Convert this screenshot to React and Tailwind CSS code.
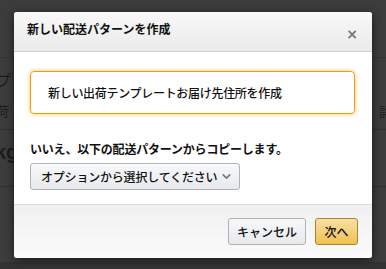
import { ChevronDown } from "lucide-react";

const jp = { fontFamily: '"Noto Sans CJK JP", "Noto Sans", sans-serif' };

function Backdrop() {
  // page content seen through the dark overlay
  return (
    <div className="flex flex-col w-full h-full text-[#1c1c1c]">
      <div className="h-[58px] border-b border-[#333]" />
      <div className="h-[72px] border-b border-[#2f2f2f] flex justify-between">
        <div className="flex flex-col ml-[-4px] pt-[12px] gap-[11px] text-[15px] leading-[20px]">
          <span>プ</span>
          <span className="text-[13px]">荷</span>
        </div>
        <div className="pt-[44px] mr-[-6px] text-[13px]">詳</div>
      </div>
      <div className="h-[57px] border-b border-[#2f2f2f] pt-[10px] ml-[-5px] text-[20px] font-bold leading-[24px]" style={{ fontFamily: '"Liberation Sans", sans-serif' }}>
        kg
      </div>
      <div className="flex-1" />
      <div className="h-[7px] bg-[#333]" />
    </div>
  );
}

export default function App() {
  return (
    <div className="relative w-[386px] h-[269px] overflow-hidden bg-[#3c3c3c]" style={jp}>
      <Backdrop />

      {/* Modal */}
      <div className="absolute left-[14px] top-[12px] w-[358px] h-[246px] bg-white rounded-[3px] shadow-[0_2px_8px_rgba(0,0,0,0.6)] flex flex-col overflow-hidden">
        <div className="h-[40px] shrink-0 flex items-center justify-between pl-[13px] pr-[14px] bg-gradient-to-b from-[#f8f8f8] to-[#ebebeb] border-b border-[#cfcfcf]">
          <span className="text-[12px] font-bold text-[#111] leading-[16px] mt-[-6px]">新しい配送パターンを作成</span>
          <span className="text-[14px] font-bold text-[#777] mt-[6px]" style={{ fontFamily: '"DejaVu Sans", sans-serif' }}>×</span>
        </div>

        <div className="flex-1 flex flex-col pl-[16px] pr-[17px] pt-[19px]">
          <div className="h-[43px] flex items-center pl-[17px] border border-[#ff9900] rounded-[4px] shadow-[0_0_4px_rgba(255,153,0,0.55)]">
            <span className="text-[12px] font-medium text-[#111] leading-[16px] tracking-[-0.3px]">新しい出荷テンプレートお届け先住所を作成</span>
          </div>

          <div className="mt-[27px] text-[12px] font-bold text-[#111] leading-[16px] tracking-[-0.2px]">
            いいえ、以下の配送パターンからコピーします。
          </div>

          <div className="mt-[6px] w-[210px] h-[27px] flex items-center justify-between pl-[10px] pr-[6px] rounded-[3px] border border-[#adb1b8] bg-gradient-to-b from-[#f7f8fa] to-[#e7e9ec] shadow-[inset_0_1px_0_rgba(255,255,255,0.6)]">
            <span className="text-[12px] font-medium text-[#111] leading-[16px] tracking-[-0.2px]">オプションから選択してください</span>
            <ChevronDown size={13} strokeWidth={3} className="text-[#777]" />
          </div>
        </div>

        <div className="h-[54px] shrink-0 flex items-center justify-end gap-[9px] pr-[14px] border-t border-[#dcdcdc] bg-gradient-to-b from-[#f0f0f0] to-[#fbfbfb]">
          <div className="w-[78px] h-[27px] flex items-center justify-center rounded-[3px] border border-[#adb1b8] bg-gradient-to-b from-[#f7f8fa] to-[#e7e9ec] text-[12px] font-medium text-[#111]">
            キャンセル
          </div>
          <div className="w-[43px] h-[27px] flex items-center justify-center rounded-[3px] border border-[#a88734] bg-gradient-to-b from-[#f7dfa5] to-[#f0c14b] text-[12px] font-medium text-[#111]">
            次へ
          </div>
        </div>
      </div>
    </div>
  );
}
